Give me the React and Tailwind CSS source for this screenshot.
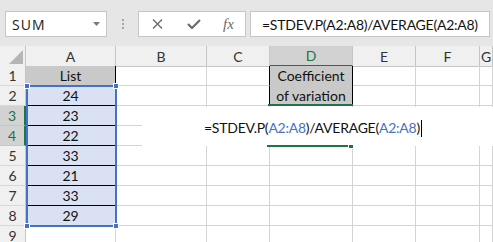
import React from "react";

const COLS = ["A", "B", "C", "D", "E", "F", "G"];
const VALUES = [24, 23, 22, 33, 21, 33, 29];
const FORMULA_PARTS = [
  { t: "=STDEV.P(", ref: false },
  { t: "A2:A8", ref: true },
  { t: ")/AVERAGE(", ref: false },
  { t: "A2:A8", ref: true },
  { t: ")", ref: false },
];

const gridCell = "h-[20px] border-r border-b border-[#d4d4d4]";

function RowHeader({ n, active }) {
  return (
    <div
      className={`h-[20px] flex items-center justify-center border-b text-[14px] ${
        active
          ? "bg-[#d2d2d2] text-[#217346] border-b-[#c6c6c6] border-r-2 border-r-[#217346]"
          : "bg-[#f0f0f0] text-[#333] border-b-[#d8d8d8] border-r border-r-[#c6c6c6]"
      }`}
    >
      {n}
    </div>
  );
}

function Toolbar() {
  return (
    <div className="h-[46px] bg-[#e6e6e6] flex items-start pt-[11px] pl-[5px] font-['Open_Sans',sans-serif]">
      <div className="w-[102px] h-[26px] bg-white border border-[#c6c6c6] flex items-center justify-between pl-[6px] pr-[6px]">
        <span className="text-[14px] tracking-[1px] text-[#222]">SUM</span>
        <svg width="7" height="4" viewBox="0 0 7 4">
          <path d="M0 0h7L3.5 4z" fill="#7a7a7a" />
        </svg>
      </div>
      <div className="w-[31px] h-[26px] flex flex-col items-center justify-center gap-[2px]">
        <span className="w-[2px] h-[2px] bg-[#a6a6a6]" />
        <span className="w-[2px] h-[2px] bg-[#a6a6a6]" />
        <span className="w-[2px] h-[2px] bg-[#a6a6a6]" />
      </div>
      <div className="w-[108px] h-[26px] bg-white border border-[#c6c6c6] flex items-center">
        <svg className="ml-[13px]" width="11" height="10" viewBox="0 0 11 10">
          <path d="M1 0.5l9 9M10 0.5l-9 9" stroke="#6b6b6b" strokeWidth="1.4" />
        </svg>
        <svg className="ml-[24px]" width="14" height="10" viewBox="0 0 14 10">
          <path d="M1 5l4 4 8-8" stroke="#6b6b6b" strokeWidth="2.2" fill="none" />
        </svg>
        <span className="ml-[22px] font-['Liberation_Serif',serif] italic text-[15px] text-[#6b6b6b] leading-none">
          fx
        </span>
      </div>
      <div className="ml-[4px] w-[240px] h-[26px] bg-white border border-[#c6c6c6] flex items-center pl-[11px] font-['Lato',sans-serif] text-[14px] tracking-[-0.25px] text-[#111] whitespace-nowrap">
        =STDEV.P(A2:A8)/AVERAGE(A2:A8)
      </div>
    </div>
  );
}

export default function App() {
  return (
    <div className="w-[493px] h-[242px] overflow-hidden bg-white">
      <Toolbar />
      <div className="relative font-['Lato',sans-serif]">
        <div className="grid grid-cols-[26px_90px_91px_63px_83px_63px_64px_1fr] auto-rows-[20px]">
          {/* header row */}
          <div className="h-[21px] bg-[#f0f0f0] border-r border-b border-[#c6c6c6] flex items-end justify-end pr-[2px] pb-[2px]">
            <svg width="14" height="14" viewBox="0 0 14 14">
              <path d="M14 0v14H0z" fill="#b5b5b5" />
            </svg>
          </div>
          {COLS.map((c) => (
            <div
              key={c}
              className={`h-[21px] flex items-center justify-center border-r text-[14px] ${
                c === "D"
                  ? "bg-[#d2d2d2] text-[#217346] border-r-[#c6c6c6] border-b-2 border-b-[#217346]"
                  : "bg-[#f0f0f0] text-[#333] border-b border-[#c6c6c6]"
              }`}
            >
              {c}
            </div>
          ))}

          {/* row 1 */}
          <RowHeader n={1} />
          <div className="h-[20px] bg-[#c9c9c9] border-r border-r-black border-b border-b-[#d4d4d4] flex items-center justify-center text-[14px] text-[#111]">
            List
          </div>
          <div className={gridCell} />
          <div className="h-[20px] border-r border-r-black border-b border-b-[#d4d4d4]" />
          <div className="row-span-2 h-[40px] bg-[#c9c9c9] border-r border-r-black flex flex-col items-center justify-center text-[14px] leading-[20px] text-[#111]">
            <span>Coefficient</span>
            <span>of variation</span>
          </div>
          <div className={gridCell} />
          <div className={gridCell} />
          <div className={gridCell} />

          {VALUES.map((v, i) => {
            const row = i + 2;
            return (
              <React.Fragment key={row}>
                <RowHeader n={row} active={row === 3 || row === 4} />
                <div className="h-[20px] bg-[#d9e1f2] border-b border-b-black border-r border-r-[#d4d4d4] flex items-center justify-center text-[14px] text-[#111]">
                  {v}
                </div>
                <div className={gridCell} />
                <div
                  className={`h-[20px] border-b border-b-[#d4d4d4] border-r ${
                    row === 2 ? "border-r-black" : "border-r-[#d4d4d4]"
                  }`}
                />
                {row !== 2 && <div className={gridCell} />}
                <div className={gridCell} />
                <div className={gridCell} />
                <div className={gridCell} />
              </React.Fragment>
            );
          })}

          <RowHeader n={9} />
          {COLS.map((c) => (
            <div key={c} className={gridCell} />
          ))}
        </div>

        {/* range reference A2:A8 */}
        <div className="absolute left-[26px] top-[39px] w-[91px] h-[142px] border-2 border-[#4472c4]" />
        <div className="absolute left-[24px] top-[37px] w-[6px] h-[6px] bg-[#4472c4] border border-white" />
        <div className="absolute left-[113px] top-[37px] w-[6px] h-[6px] bg-[#4472c4] border border-white" />
        <div className="absolute left-[24px] top-[177px] w-[6px] h-[6px] bg-[#4472c4] border border-white" />
        <div className="absolute left-[113px] top-[177px] w-[6px] h-[6px] bg-[#4472c4] border border-white" />

        {/* in-cell editor */}
        <div className="absolute left-[142px] top-[61px] right-0 h-[39px] bg-white">
          <div className="absolute left-[62px] top-[11px] flex items-center text-[14px] tracking-[-0.25px] leading-[20px] text-[#111] whitespace-nowrap">
            {FORMULA_PARTS.map((p, i) => (
              <span key={i} className={p.ref ? "text-[#4472c4]" : ""}>
                {p.t}
              </span>
            ))}
            <span className="ml-[1px] w-[1px] h-[17px] bg-black" />
          </div>
        </div>

        {/* active cell border */}
        <div className="absolute left-[268px] top-[58px] w-[85px] h-[2px] bg-[#217346]" />
        <div className="absolute left-[267px] top-[99px] w-[82px] h-[2px] bg-[#217346]" />
        <div className="absolute left-[348px] top-[98px] w-[6px] h-[5px] bg-[#217346] border border-white" />
      </div>
    </div>
  );
}
